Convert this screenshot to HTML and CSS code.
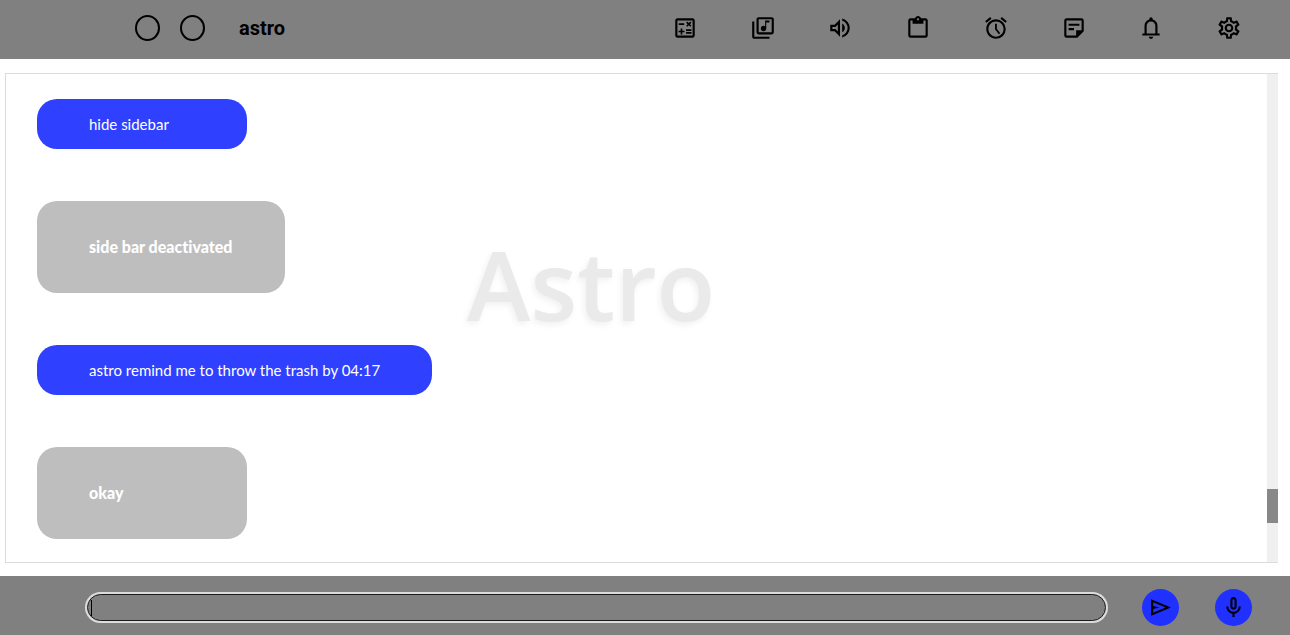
FILE: index.html
```html
<!DOCTYPE html>
<html lang="en">
<head>
<meta charset="utf-8">
<title>astro</title>
<link rel="stylesheet" href="styles.css">
</head>
<body>
<header class="topbar">
  <div class="brand">
    <button class="ring" type="button" aria-label="Back"></button>
    <button class="ring" type="button" aria-label="Forward"></button>
    <h1 class="title">astro</h1>
  </div>
  <nav class="tools" aria-label="Tools">
    <button class="tool" type="button" aria-label="Calculator"><svg viewBox="0 -960 960 960"><path d="M320-240h60v-80h80v-60h-80v-80h-60v80h-80v60h80v80Zm200-30h200v-60H520v60Zm0-100h200v-60H520v60Zm44-152 56-56 56 56 42-42-56-58 56-56-42-42-56 56-56-56-42 42 56 56-56 58 42 42Zm-314-70h200v-60H250v60Zm-50 472q-33 0-56.500-23.500T120-200v-560q0-33 23.500-56.500T200-840h560q33 0 56.500 23.500T840-760v560q0 33-23.500 56.500T760-120H200Zm0-80h560v-560H200v560Z"/></svg></button>
    <button class="tool" type="button" aria-label="Music"><svg viewBox="0 -960 960 960"><path d="M500-360q42 0 71-29t29-71v-220h120v-80H560v220q-13-10-28-15t-32-5q-42 0-71 29t-29 71q0 42 29 71t71 29ZM320-240q-33 0-56.500-23.500T240-320v-480q0-33 23.500-56.500T320-880h480q33 0 56.500 23.500T880-800v480q0 33-23.500 56.500T800-240H320Zm0-80h480v-480H320v480ZM160-80q-33 0-56.500-23.500T80-160v-560h80v560h560v80H160Z"/></svg></button>
    <button class="tool" type="button" aria-label="Volume"><svg viewBox="0 -960 960 960"><path d="M560-131v-82q90-26 145-100t55-168q0-94-55-168T560-749v-82q124 28 202 125.500T840-481q0 127-78 224.500T560-131ZM120-360v-240h160l200-200v640L280-360H120Zm440 40v-322q47 22 73.500 66t26.500 96q0 51-26.500 94.500T560-320ZM400-606l-86 86H200v80h114l86 86v-252Z"/></svg></button>
    <button class="tool" type="button" aria-label="Clipboard"><svg viewBox="0 -960 960 960"><path d="M200-120q-33 0-56.500-23.500T120-200v-560q0-33 23.500-56.500T200-840h167q11-35 43-57.500t70-22.500q40 0 71.500 22.500T594-840h166q33 0 56.500 23.500T840-760v560q0 33-23.500 56.500T760-120H200Zm0-80h560v-560h-80v120H280v-120h-80v560Zm280-560q17 0 28.500-11.500T520-800q0-17-11.500-28.500T480-840q-17 0-28.500 11.500T440-800q0 17 11.500 28.500T480-760Z"/></svg></button>
    <button class="tool" type="button" aria-label="Alarm"><svg viewBox="0 0 24 24"><path d="M22 5.720l-4.600-3.860-1.290 1.530 4.600 3.860L22 5.720zM7.880 3.390L6.600 1.860 2 5.710l1.290 1.530 4.590-3.850zM11.100 8h1.700v4.700l3.100 4.100-1.300 1-3.500-4.600zM12 4c-4.970 0-9 4.030-9 9s4.020 9 9 9a9 9 0 0 0 0-18zm0 16c-3.870 0-7-3.130-7-7s3.130-7 7-7 7 3.130 7 7-3.130 7-7 7z"/></svg></button>
    <button class="tool" type="button" aria-label="Notes"><svg viewBox="0 -960 960 960"><path d="M200-200h360v-200h200v-360H200v560Zm0 80q-33 0-56.500-23.500T120-200v-560q0-33 23.500-56.500T200-840h560q33 0 56.500 23.500T840-760v400L600-120H200Zm80-280v-80h200v80H280Zm0-160v-80h400v80H280Z"/></svg></button>
    <button class="tool" type="button" aria-label="Notifications"><svg viewBox="0 -960 960 960"><path d="M160-200v-80h80v-280q0-83 50-147.500T420-792v-28q0-25 17.500-42.500T480-880q25 0 42.500 17.500T540-820v28q80 20 130 84.500T720-560v280h80v80H160Zm320 120q-33 0-56.500-23.500T400-160h160q0 33-23.500 56.500T480-80ZM320-280h320v-280q0-66-47-113t-113-47q-66 0-113 47t-47 113v280Z"/></svg></button>
    <button class="tool" type="button" aria-label="Settings"><svg viewBox="0 0 24 24"><path d="M19.430 12.980c.040-.320.070-.640.070-.980s-.030-.660-.070-.980l2.110-1.650c.190-.150.240-.420.120-.640l-2-3.460c-.090-.160-.260-.250-.440-.250-.060 0-.120.010-.170.030l-2.490 1c-.520-.400-1.080-.730-1.690-.980l-.380-2.650C14.460 2.180 14.250 2 14 2h-4c-.250 0-.460.180-.490.420l-.380 2.650c-.610.250-1.170.590-1.690.980l-2.490-1c-.060-.020-.120-.030-.180-.030-.170 0-.340.090-.430.250l-2 3.460c-.130.220-.070.490.120.640l2.110 1.650c-.040.320-.070.650-.070.980s.030.660.070.980l-2.110 1.650c-.190.150-.240.420-.120.640l2 3.460c.090.160.260.250.440.250.060 0 .120-.010.170-.030l2.490-1c.520.400 1.080.730 1.690.980l.380 2.650c.030.240.240.420.490.420h4c.250 0 .460-.180.490-.420l.380-2.650c.610-.250 1.170-.590 1.690-.980l2.490 1c.060.020.120.030.180.030.170 0 .340-.090.430-.250l2-3.460c.120-.220.070-.490-.120-.640l-2.110-1.650zm-1.980-1.710c.040.310.050.520.050.730 0 .210-.020.430-.050.730l-.140 1.130.890.700 1.080.840-.700 1.210-1.270-.510-1.040-.420-.900.680c-.430.320-.840.560-1.250.730l-1.060.430-.160 1.130-.200 1.350h-1.400l-.190-1.350-.160-1.130-1.060-.430c-.430-.180-.830-.410-1.230-.710l-.910-.700-1.060.430-1.270.510-.700-1.210 1.080-.840.890-.700-.140-1.130c-.030-.310-.050-.540-.050-.740s.020-.430.050-.730l.140-1.130-.890-.700-1.080-.840.700-1.210 1.270.510 1.040.420.900-.680c.430-.320.840-.560 1.250-.730l1.060-.430.160-1.130.200-1.350h1.390l.190 1.350.160 1.130 1.060.430c.430.180.830.410 1.230.710l.910.700 1.060-.430 1.270-.510.700 1.210-1.070.850-.890.700.140 1.130zM12 8c-2.210 0-4 1.790-4 4s1.790 4 4 4 4-1.790 4-4-1.790-4-4-4zm0 6c-1.100 0-2-.900-2-2s.900-2 2-2 2 .900 2 2-.900 2-2 2z"/></svg></button>
  </nav>
</header>
<main class="chat">
  <span class="watermark">Astro</span>
  <div class="messages">
    <p class="bubble user">hide sidebar</p>
    <p class="bubble reply">side bar deactivated</p>
    <p class="bubble user">astro remind me to throw the trash by 04:17</p>
    <p class="bubble reply">okay</p>
  </div>
  <div class="track"><div class="thumb"></div></div>
</main>
<form class="composer">
  <div class="field">
    <input class="entry" type="text" aria-label="Message">
    <span class="caret"></span>
  </div>
  <button class="action" type="button" aria-label="Send"><svg viewBox="0 -960 960 960"><path d="M120-160v-640l760 320-760 320Zm80-120 474-200-474-200v140l240 60-240 60v140Z"/></svg></button>
  <button class="action" type="button" aria-label="Speak"><svg viewBox="0 -960 960 960"><path d="M480-400q-50 0-85-35t-35-85v-240q0-50 35-85t85-35q50 0 85 35t35 85v240q0 50-35 85t-85 35Zm-40 280v-123q-104-14-172-93t-68-184h80q0 83 58.500 141.500T480-320q83 0 141.500-58.500T680-520h80q0 105-68 184t-172 93v123h-80Zm40-360q17 0 28.500-11.500T520-520v-240q0-17-11.500-28.500T480-800q-17 0-28.500 11.500T440-760v240q0 17 11.500 28.500T480-480Z"/></svg></button>
</form>
</body>
</html>
```
FILE: styles.css
```css
* {
  box-sizing: border-box;
}

body {
  margin: 0;
  min-height: 100vh;
  display: flex;
  flex-direction: column;
  background: #fff;
  font-family: Lato, "Liberation Sans", sans-serif;
}

button {
  padding: 0;
  border: 0;
  background: none;
  color: #000;
}

svg {
  display: block;
  width: 100%;
  fill: currentColor;
}

.topbar {
  display: flex;
  align-items: center;
  justify-content: space-between;
  padding: 15px 48px 18px 135px;
  background: #808080;
}

.brand {
  display: flex;
  align-items: center;
  gap: 20px;
}

.ring {
  width: 25px;
  height: 26px;
  border: 2px solid #000;
  border-radius: 50%;
}

.title {
  margin: 0 0 0 14px;
  font: bold 20px/26px Roboto, "Liberation Sans", sans-serif;
}

.tools {
  flex: 0 0 570px;
  display: flex;
  justify-content: space-between;
}

.tool {
  width: 26px;
}

.chat {
  position: relative;
  flex: 1;
  display: flex;
  margin: 14px 12px 13px 5px;
  border: 1px solid #dcdcdc;
  border-right: 0;
}

.watermark {
  position: absolute;
  top: 43%;
  left: 46%;
  transform: translate(-50%, -50%);
  color: #eaeaea;
  font: 600 96px/120px "Open Sans", sans-serif;
  text-shadow: -2px 3px 6px rgba(0, 0, 0, 0.06);
}

.messages {
  position: relative;
  flex: 1;
  display: flex;
  flex-direction: column;
  align-items: flex-start;
  gap: 52px;
  padding: 25px 31px 23px;
}

.bubble {
  margin: 0;
  min-width: 210px;
  padding: 15px 52px;
  border-radius: 20px;
  color: #fff;
  font-size: 15px;
  line-height: 20px;
}

.user {
  background: #3040ff;
}

.reply {
  padding: 36px 52px;
  background: #bebebe;
  font-size: 16px;
  font-weight: 900;
  font-variant-ligatures: none;
}

.track {
  width: 11px;
  display: grid;
  grid-template-rows: 415fr 34fr 39fr;
  background: #f0f0f0;
}

.thumb {
  grid-row: 2;
  background: #888;
}

.composer {
  display: flex;
  align-items: center;
  gap: 36px;
  padding: 13px 38px 10px 87px;
  background: #808080;
}

.field {
  position: relative;
  flex: 1;
}

.entry {
  display: block;
  width: 100%;
  height: 27px;
  padding: 0 4px;
  border: 1px solid #1a1a1a;
  border-radius: 14px;
  outline: 0;
  background: #808080;
  box-shadow: 0 0 0 2px #dcdcdc;
  font: 16px Lato, sans-serif;
}

.caret {
  position: absolute;
  top: 6px;
  left: 4px;
  width: 1px;
  height: 16px;
  background: #000;
}

.action {
  width: 37px;
  height: 37px;
  padding: 6px;
  border-radius: 50%;
  background: #2030ff;
}
```
